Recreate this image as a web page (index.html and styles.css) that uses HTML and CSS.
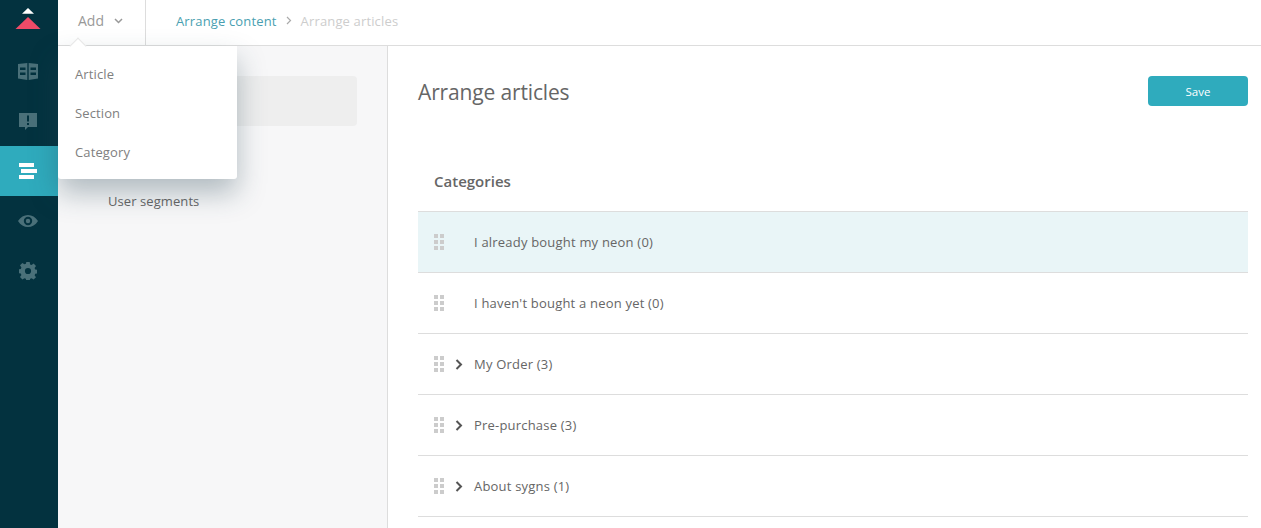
FILE: index.html
```html
<!DOCTYPE html>
<html lang="en">
<head>
<meta charset="utf-8">
<title>Arrange articles</title>
<link rel="stylesheet" href="styles.css">
</head>
<body>
<div class="app">
  <nav class="rail">
    <div class="logo">
      <svg width="26" height="30" viewBox="0 0 26 30"><path class="logo-top" d="M13 8l6 5.700H7z"/><path class="logo-main" d="M13 17l12.500 12H.5z"/></svg>
    </div>
    <a class="rail-item"><svg width="20" height="17" viewBox="0 0 20 17"><path class="ico" fill-rule="evenodd" d="M0 1 9.300 0V17L0 15.500ZM10.700 0 20 1V15.500L10.700 17ZM2 4.500v2.500h5.500V4.500ZM2 9.500v2.500h5.500V9.500ZM12.500 4.500v2.500H18V4.500ZM12.500 9.500v2.500H18V9.500Z"/></svg></a>
    <a class="rail-item"><svg width="18" height="17" viewBox="0 0 18 17"><path class="ico" fill-rule="evenodd" d="M0 0H18V14H9L6 17V14H0ZM8 2.500V8.500H10V2.500ZM8 10V12H10V10Z"/></svg></a>
    <a class="rail-item active"><svg width="18" height="16" viewBox="0 0 18 16"><path class="ico-on" d="M0 0h15v4H0zM2 6h16v4H2zM0 12h15v4H0z"/></svg></a>
    <a class="rail-item"><svg width="20" height="12" viewBox="0 0 20 12"><path class="ico" fill-rule="evenodd" d="M0 6C2.500 2 6 0 10 0S17.500 2 20 6C17.500 10 14 12 10 12S2.500 10 0 6ZM10 1.800A4.200 4.200 0 1 0 10 10.200 4.200 4.200 0 0 0 10 1.800ZM10 3.800A2.200 2.200 0 1 1 10 8.200 2.200 2.200 0 0 1 10 3.800Z"/></svg></a>
    <a class="rail-item"><svg width="18" height="18" viewBox="0 0 18 18"><path class="ico" fill-rule="evenodd" d="M7.300 0h3.400l.4 2.400 1.500.6 2-1.400 2.400 2.400-1.400 2 .6 1.500 2.400.4v3.400l-2.400.4-.6 1.500 1.400 2-2.400 2.400-2-1.400-1.500.6-.4 2.400H7.300l-.4-2.400-1.500-.6-2 1.400L1 15l1.400-2-.6-1.500L-.6 11V7.300l2.400-.4.6-1.500L1 3.300l2.400-2.400 2 1.400 1.500-.6ZM9 5.900a3.100 3.100 0 1 0 0 6.200 3.100 3.100 0 0 0 0-6.200Z"/></svg></a>
  </nav>
  <div class="shell">
    <header class="topbar">
      <div class="add">Add <svg class="add-chev" width="9" height="6" viewBox="0 0 9 6"><path d="M1 1l3.500 3.500L8 1"/></svg></div>
      <div class="crumbs">
        <a class="crumb-link">Arrange content</a>
        <svg class="crumb-sep" width="6" height="9" viewBox="0 0 6 9"><path d="M1 1l3.500 3.500L1 8"/></svg>
        <span class="crumb-here">Arrange articles</span>
      </div>
    </header>
    <div class="body">
      <aside class="side">
        <div class="side-active"></div>
        <div class="side-links">
          <a class="side-link">User segments</a>
        </div>
      </aside>
      <main class="main">
        <div class="head">
          <h1 class="title">Arrange articles</h1>
          <button class="save">Save</button>
        </div>
        <h2 class="cat-title">Categories</h2>
        <ul class="rows">
          <li class="row selected"><span class="grip"><i></i><i></i><i></i><i></i><i></i><i></i></span><span class="chev"></span><span>I already bought my neon (0)</span></li>
          <li class="row"><span class="grip"><i></i><i></i><i></i><i></i><i></i><i></i></span><span class="chev"></span><span>I haven't bought a neon yet (0)</span></li>
          <li class="row"><span class="grip"><i></i><i></i><i></i><i></i><i></i><i></i></span><span class="chev"><svg width="8" height="11" viewBox="0 0 8 11"><path d="M1.500 1l4.500 4.500L1.500 10"/></svg></span><span>My Order (3)</span></li>
          <li class="row"><span class="grip"><i></i><i></i><i></i><i></i><i></i><i></i></span><span class="chev"><svg width="8" height="11" viewBox="0 0 8 11"><path d="M1.500 1l4.500 4.500L1.500 10"/></svg></span><span>Pre-purchase (3)</span></li>
          <li class="row"><span class="grip"><i></i><i></i><i></i><i></i><i></i><i></i></span><span class="chev"><svg width="8" height="11" viewBox="0 0 8 11"><path d="M1.500 1l4.500 4.500L1.500 10"/></svg></span><span>About sygns (1)</span></li>
        </ul>
      </main>
    </div>
    <div class="menu">
      <a class="menu-item">Article</a>
      <a class="menu-item">Section</a>
      <a class="menu-item">Category</a>
    </div>
  </div>
</div>
</body>
</html>
```
FILE: styles.css
```css
* { box-sizing: border-box; }
html, body { margin: 0; height: 100%; overflow: hidden; }
body { font-family: "Open Sans", "Noto Sans", sans-serif; font-size: 13px; color: #666; background: #fff; }
.app { display: flex; height: 528px; }
.rail { width: 58px; flex: none; background: #03323f; display: flex; flex-direction: column; }
.logo { height: 46px; display: flex; justify-content: center; align-items: flex-start; padding-right: 2px; }
.logo-top { fill: #fff; }
.logo-main { fill: #ee4b68; }
.rail-item { height: 50px; display: flex; align-items: center; justify-content: center; padding-right: 2px; }
.rail-item.active { background: #2fabbd; }
.ico { fill: #4a7079; }
.ico-on { fill: #fff; }
.shell { flex: 1; min-width: 0; display: flex; flex-direction: column; position: relative; }
.topbar { height: 46px; flex: none; display: flex; border-bottom: 1px solid #ddd; }
.add { width: 88px; border-right: 1px solid #ddd; padding: 0 0 4px 20px; display: flex; align-items: center; color: #999; gap: 10px; font-size: 14px; }
.add-chev path, .crumb-sep path { fill: none; stroke: #999; stroke-width: 1.500; }
.crumbs { display: flex; align-items: center; padding: 0 0 4px 30px; font-size: 13px; letter-spacing: .15px; gap: 9px; }
.crumb-link { color: #4a9fb1; }
.crumb-here { color: #cdcdcd; }
.crumb-sep path { stroke: #aaa; stroke-width: 1.200; }
.body { flex: 1; display: flex; min-height: 0; }
.side { width: 330px; flex: none; background: #f7f7f8; border-right: 1px solid #ddd; padding: 30px 30px 0 30px; }
.side-active { height: 50px; background: #eee; border-radius: 4px; }
.side-links { padding: 66px 0 0 20px; }
.side-link { color: #666; letter-spacing: .08px; }
.main { flex: 1; min-width: 0; padding: 30px 13px 0 30px; }
.head { display: flex; justify-content: space-between; align-items: flex-start; height: 76px; }
.title { margin: 0; font-size: 21px; font-weight: 400; letter-spacing: -.15px; color: #666; line-height: 32px; }
.save { width: 100px; height: 30px; border: 0; border-radius: 4px; background: #2fabbd; color: #fff; font: 11.500px "Open Sans", sans-serif; padding: 0; }
.cat-title { margin: 0; height: 59px; padding-left: 16px; font-size: 15px; font-weight: 600; color: #666; line-height: 58px; }
.rows { margin: 0; padding: 0; list-style: none; border-top: 1px solid #ddd; }
.row { height: 61px; display: flex; align-items: center; border-bottom: 1px solid #ddd; padding-left: 16px; color: #666; letter-spacing: .2px; }
.row.selected { background: #e9f5f7; }
.grip { width: 10px; height: 16px; display: grid; grid-template-columns: 4px 4px; grid-auto-rows: 4px; gap: 2px; margin-right: 11px; flex: none; }
.grip i { background: #ccc; display: block; }
.chev { width: 19px; flex: none; display: flex; align-items: center; }
.chev path { fill: none; stroke: #555; stroke-width: 2; }
.menu { position: absolute; left: 0; top: 46px; width: 179px; height: 133px; background: #fff; border-radius: 0 0 3px 3px; box-shadow: 0 14px 28px rgba(40, 70, 85, .34); display: flex; flex-direction: column; padding-top: 9px; }
.menu::before { content: ""; position: absolute; left: 14px; top: -6px; width: 11px; height: 11px; background: #fff; transform: rotate(45deg); border-left: 1px solid #e6e6e6; border-top: 1px solid #e6e6e6; }
.menu-item { height: 39px; line-height: 39px; padding-left: 17px; color: #808080; letter-spacing: .12px; position: relative; }
```
